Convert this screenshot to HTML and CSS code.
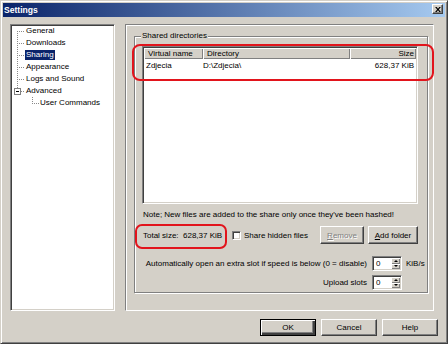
FILE: index.html
```html
<!DOCTYPE html>
<html lang="en">
<head>
  <meta charset="UTF-8">
  <title>Settings</title>
  <link rel="stylesheet" href="styles.css">
</head>
<body>
  <div class="window">
    <div class="titlebar">
      <span class="title">Settings</span>
      <button class="close-btn" aria-label="Close">
        <svg viewBox="0 0 7 6" width="7" height="6"><path d="M0 0h2l1.5 2 1.5-2h2l-2.5 3 2.5 3h-2l-1.5-2-1.5 2h-2l2.5-3z"/></svg>
      </button>
    </div>

    <div class="content">
      <div class="main">
        <ul class="tree">
          <li class="node first"><span class="label">General</span></li>
          <li class="node"><span class="label">Downloads</span></li>
          <li class="node"><span class="label selected">Sharing</span></li>
          <li class="node"><span class="label">Appearance</span></li>
          <li class="node"><span class="label">Logs and Sound</span></li>
          <li class="node last"><span class="toggle"></span><span class="label">Advanced</span></li>
          <li class="node child"><span class="label">User Commands</span></li>
        </ul>

        <div class="page">
          <fieldset class="group">
            <legend>Shared directories</legend>

            <div class="listview">
              <div class="lv-head">
                <span class="col col-name">Virtual name</span>
                <span class="col col-dir">Directory</span>
                <span class="col col-size">Size</span>
              </div>
              <div class="lv-row">
                <span class="cell col-name">Zdjecia</span>
                <span class="cell col-dir">D:\Zdjecia\</span>
                <span class="cell col-size">628,37 KiB</span>
              </div>
            </div>

            <p class="note">Note; New files are added to the share only once they've been hashed!</p>

            <div class="share-row">
              <span class="total">Total size:&nbsp; 628,37 KiB</span>
              <label class="check"><span class="box"></span>Share hidden files</label>
              <button class="btn btn-remove" disabled><u>R</u>emove</button>
              <button class="btn btn-add"><u>A</u>dd folder</button>
            </div>

            <div class="slots">
              <span class="slot-label">Automatically open an extra slot if speed is below (0 = disable)</span>
              <span class="spin"><span class="spin-val">0</span><span class="spin-btns"><span class="arrow up"></span><span class="arrow down"></span></span></span>
              <span class="unit">KiB/s</span>

              <span class="slot-label">Upload slots</span>
              <span class="spin"><span class="spin-val">0</span><span class="spin-btns"><span class="arrow up"></span><span class="arrow down"></span></span></span>
            </div>
          </fieldset>

          <div class="mark mark-list"></div>
          <div class="mark mark-total"></div>
        </div>
      </div>

      <div class="buttons">
        <button class="btn btn-default">OK</button>
        <button class="btn">Cancel</button>
        <button class="btn">Help</button>
      </div>
    </div>
  </div>
</body>
</html>
```

FILE: styles.css
```css
* {
  margin: 0;
  padding: 0;
  box-sizing: border-box;
}
body {
  font-family: 'Liberation Sans', Arial, sans-serif;
  font-size: 8px;
  color: #000;
  background: #d4d0c8;
}
.window {
  width: 448px;
  height: 344px;
  display: flex;
  flex-direction: column;
  padding: 2px;
  border: 1px solid;
  border-color: #d4d0c8 #404040 #404040 #d4d0c8;
  box-shadow: inset 1px 1px #fff, inset -1px -1px #808080;
  background: #d4d0c8;
}
.titlebar {
  height: 14px;
  display: flex;
  align-items: flex-start;
  justify-content: space-between;
  padding: 0 2px 0 1px;
  background: linear-gradient(to right, #0a246a, #a6caf0);
}
.title {
  color: #fff;
  font-weight: 700;
  font-size: 8.6px;
  line-height: 14px;
}
.close-btn {
  width: 11px;
  height: 10px;
  margin-top: 1px;
  display: flex;
  align-items: center;
  justify-content: center;
  background: #d4d0c8;
  border: 1px solid;
  border-color: #fff #404040 #404040 #fff;
  box-shadow: inset -1px -1px #808080;
}
.close-btn svg {
  width: 6px;
  height: 5px;
}

.content {
  flex: 1;
  display: flex;
  flex-direction: column;
  padding: 7px 0 5px;
}
.main {
  height: 287px;
  display: flex;
  gap: 10px;
  padding-left: 7px;
}

/* tree */
.tree {
  width: 105px;
  list-style: none;
  background: #fff;
  border: 1px solid;
  border-color: #808080 #fff #fff #808080;
  box-shadow: inset 1px 1px #404040, inset -1px -1px #d4d0c8;
}
.node {
  position: relative;
  height: 12px;
  display: flex;
  align-items: center;
  padding-left: 3px;
  line-height: 12px;
}
.node::before {
  content: "";
  width: 11px;
  height: 12px;
  flex: none;
  background:
    repeating-linear-gradient(#8a8a8a 0 1px, transparent 1px 2px) 3px 0 / 1px 12px no-repeat,
    repeating-linear-gradient(90deg, #8a8a8a 0 1px, transparent 1px 2px) 3px 6px / 8px 1px no-repeat;
}
.node.first::before {
  background:
    repeating-linear-gradient(#8a8a8a 0 1px, transparent 1px 2px) 3px 6px / 1px 6px no-repeat,
    repeating-linear-gradient(90deg, #8a8a8a 0 1px, transparent 1px 2px) 3px 6px / 8px 1px no-repeat;
}
.node.last::before,
.node.child::before {
  background:
    repeating-linear-gradient(#8a8a8a 0 1px, transparent 1px 2px) 3px 0 / 1px 7px no-repeat,
    repeating-linear-gradient(90deg, #8a8a8a 0 1px, transparent 1px 2px) 3px 6px / 8px 1px no-repeat;
}
.node.child {
  padding-left: 18px;
}
.node.child::before {
  width: 10px;
}
.toggle {
  position: absolute;
  left: 3px;
  top: 3px;
  width: 7px;
  height: 7px;
  background: #fff linear-gradient(#000, #000) center / 3px 1px no-repeat;
  border: 1px solid #808080;
}
.label {
  padding: 0 1px;
  line-height: 10px;
  white-space: nowrap;
}
.label.selected {
  background: #0a246a;
  color: #fff;
}

/* page */
.page {
  position: relative;
  width: 309px;
  border: 1px solid;
  border-color: #808080 #fff #fff #808080;
  box-shadow: inset 1px 1px #fff;
}
.group {
  margin: 6px 5px 0 8px;
  height: 262px;
  border: 1px solid #808080;
  box-shadow: 1px 1px #fff, inset 1px 1px #fff;
  padding: 0;
}
.group legend {
  margin-left: 6px;
  padding: 0 1px;
  line-height: 10px;
  background: #d4d0c8;
}

.listview {
  margin: 5px 9px 0 7px;
  height: 158px;
  background: #fff;
  border: 1px solid;
  border-color: #808080 #fff #fff #808080;
  box-shadow: inset 1px 1px #404040, inset -1px -1px #d4d0c8;
  padding: 1px;
}
.lv-head,
.lv-row {
  display: flex;
}
.col {
  height: 11px;
  line-height: 11px;
  background: #d4d0c8;
  box-shadow: inset 1px 1px #fff, inset -1px -1px #808080;
  padding-left: 4px;
}
.col-name { width: 59px; }
.col-dir { width: 147px; }
.col-size {
  width: 66px;
  text-align: right;
  padding-right: 2px;
}
.lv-row {
  margin-top: 1px;
  height: 11px;
  line-height: 11px;
}
.cell.col-name { padding-left: 2px; }
.cell.col-dir { padding-left: 0; }

.note {
  margin: 6px 0 0 8px;
  line-height: 10px;
  white-space: nowrap;
}
.share-row {
  margin: 6px 9px 0 8px;
  height: 18px;
  display: flex;
  align-items: center;
}
.total {
  width: 89px;
}
.check {
  display: flex;
  align-items: center;
  gap: 3px;
  flex: 1;
}
.box {
  width: 9px;
  height: 9px;
  background: #fff;
  border: 1px solid;
  border-color: #808080 #fff #fff #808080;
  box-shadow: inset 1px 1px #404040, inset -1px -1px #d4d0c8;
}

.btn {
  height: 18px;
  font: inherit;
  color: #000;
  background: #d4d0c8;
  border: 1px solid;
  border-color: #fff #404040 #404040 #fff;
  box-shadow: inset -1px -1px #808080;
}
.btn u {
  text-decoration: underline;
}
.btn-remove {
  width: 44px;
  margin-right: 4px;
  color: #808080;
  text-shadow: 1px 1px #fff;
}
.btn-add {
  width: 50px;
}

.slots {
  margin: 12px 1px 0 0;
  display: grid;
  grid-template-columns: 1fr 30px 19px;
  column-gap: 5px;
  row-gap: 4px;
  align-items: center;
}
.slot-label {
  justify-self: end;
  white-space: nowrap;
}
.unit {
  margin-left: -1px;
}
.spin {
  height: 15px;
  display: flex;
  background: #fff;
  border: 1px solid;
  border-color: #808080 #fff #fff #808080;
  box-shadow: inset 1px 1px #404040, inset -1px -1px #d4d0c8;
  padding: 1px;
}
.spin-val {
  flex: 1;
  padding-left: 2px;
  line-height: 12px;
}
.spin-btns {
  width: 9px;
  display: flex;
  flex-direction: column;
}
.arrow {
  flex: 1;
  display: flex;
  align-items: center;
  justify-content: center;
  background: #d4d0c8;
  box-shadow: inset 1px 1px #fff, inset -1px -1px #808080;
}
.arrow::after {
  content: "";
  border-left: 2px solid transparent;
  border-right: 2px solid transparent;
}
.arrow.up::after { border-bottom: 2px solid #000; }
.arrow.down::after { border-top: 2px solid #000; }

/* red annotation marks drawn over the dialog */
.mark {
  position: absolute;
  border: 2.5px solid #e2141c;
  border-radius: 8px;
}
.mark-list {
  left: 6px;
  top: 19px;
  width: 302px;
  height: 37px;
}
.mark-total {
  left: 9px;
  top: 199px;
  width: 92px;
  height: 25px;
  border-radius: 7px;
}

/* dialog buttons */
.buttons {
  margin-top: 8px;
  display: flex;
  justify-content: flex-end;
  gap: 5px;
  padding-right: 7px;
}
.buttons .btn {
  width: 56px;
  height: 17px;
}
.btn-default {
  border-color: #000;
  box-shadow: inset 1px 1px #fff, inset -2px -2px #404040, inset -3px -3px #808080;
}
```
